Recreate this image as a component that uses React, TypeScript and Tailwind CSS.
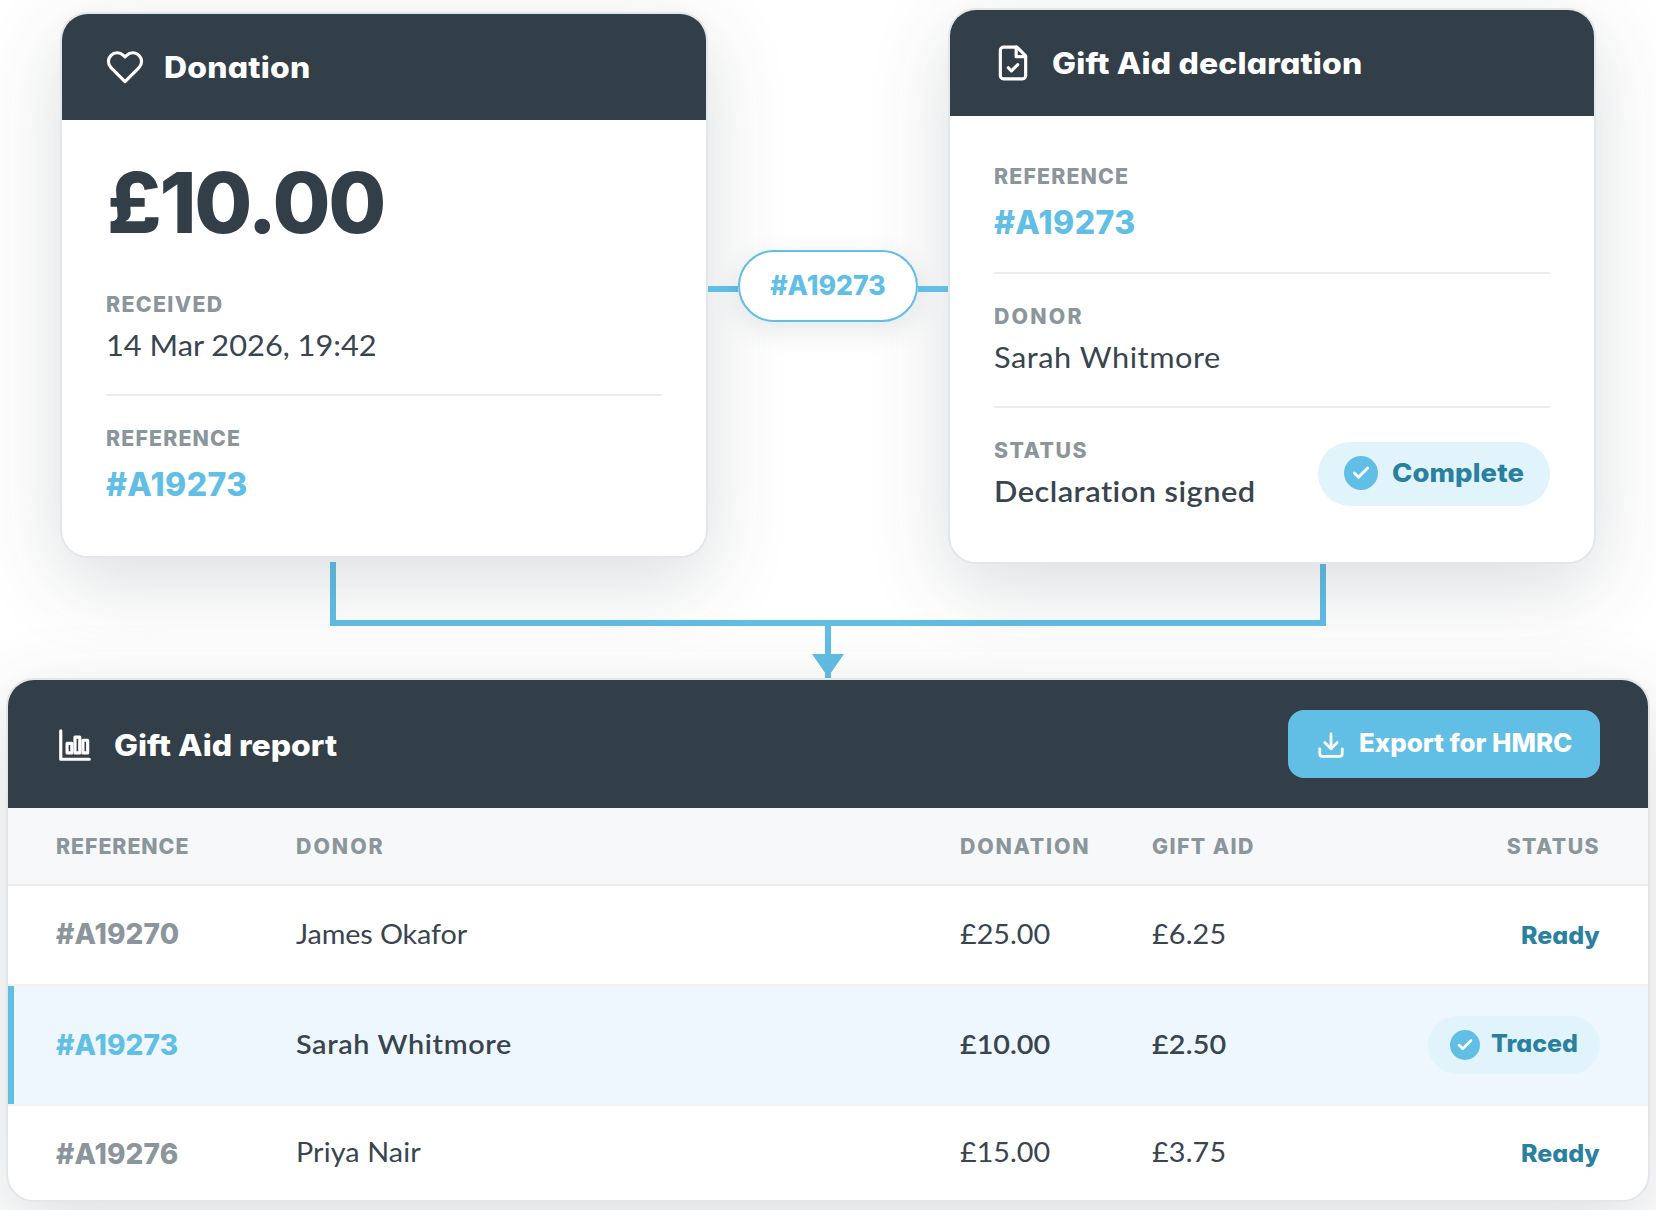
import React from "react";

const HEADING = "font-['Inter',sans-serif] [font-feature-settings:'cv11'] whitespace-nowrap";
const BODY = "font-['Lato',sans-serif] whitespace-nowrap origin-left scale-x-[1.05]";

function HeartIcon() {
  return (
    <svg viewBox="0 0 24 24" className="size-[38px] shrink-0" fill="none" stroke="currentColor" strokeWidth="2" strokeLinecap="round" strokeLinejoin="round">
      <path d="M20.84 4.61a5.5 5.5 0 0 0-7.78 0L12 5.67l-1.06-1.06a5.5 5.5 0 0 0-7.78 7.78l1.06 1.06L12 21.23l7.78-7.78 1.06-1.06a5.5 5.5 0 0 0 0-7.78z" />
    </svg>
  );
}

function FileCheckIcon() {
  return (
    <svg viewBox="0 0 24 24" className="size-[38px] shrink-0" fill="none" stroke="currentColor" strokeWidth="2" strokeLinecap="round" strokeLinejoin="round">
      <path d="M14.5 2H6a2 2 0 0 0-2 2v16a2 2 0 0 0 2 2h12a2 2 0 0 0 2-2V7.5z" />
      <path d="M14 2v6h6" />
      <path d="m9 15 2 2 4-4" />
    </svg>
  );
}

function ChartIcon() {
  return (
    <svg viewBox="0 0 24 24" className="mt-[2px] size-[38px] shrink-0" fill="none" stroke="currentColor" strokeWidth="2" strokeLinecap="round" strokeLinejoin="round">
      <path d="M3 3v18h18" />
      <rect x="7" y="11" width="3" height="6" />
      <rect x="12" y="7" width="3" height="10" />
      <rect x="17" y="9" width="3" height="8" />
    </svg>
  );
}

function DownloadIcon() {
  return (
    <svg viewBox="0 0 24 24" className="mt-[2px] size-[30px] shrink-0" fill="none" stroke="currentColor" strokeWidth="2.2" strokeLinecap="round" strokeLinejoin="round">
      <path d="M21 15v4a2 2 0 0 1-2 2H5a2 2 0 0 1-2-2v-4" />
      <path d="m7 10 5 5 5-5" />
      <path d="M12 15V3" />
    </svg>
  );
}

function CheckDot({ small = false }: { small?: boolean }) {
  return (
    <span className={`flex shrink-0 items-center justify-center rounded-full bg-[#61bee5] text-white ${small ? "size-[30px]" : "size-[34px]"}`}>
      <svg viewBox="0 0 24 24" className={small ? "size-[18px]" : "size-[20px]"} fill="none" stroke="currentColor" strokeWidth="3.4" strokeLinecap="round" strokeLinejoin="round">
        <path d="M20 6 9 17l-5-5" />
      </svg>
    </span>
  );
}

function Card({ className, children }: { className: string; children: React.ReactNode }) {
  return (
    <section className={`relative z-10 shrink-0 overflow-hidden rounded-[28px] border-2 border-[#e3e7ea] bg-white bg-clip-padding shadow-[0_24px_80px_rgba(50,62,72,0.17)] ${className}`}>
      {children}
    </section>
  );
}

function CardHeader({ icon, children }: { icon: React.ReactNode; children: React.ReactNode }) {
  return (
    <header className="flex h-[106px] items-center gap-[20px] bg-[#323e48] px-[44px] text-white">
      {icon}
      {children}
    </header>
  );
}

function Label({ tracking, children }: { tracking: string; children: string }) {
  return <div className={`${HEADING} ${tracking} text-[21.3px] leading-[24px] font-extrabold text-[#8b969c]`}>{children}</div>;
}

function Reference() {
  return <div className={`${HEADING} mt-[14px] pt-[2px] text-[32px] leading-[38px] font-extrabold tracking-[0.4px] text-[#61bee5]`}>#A19273</div>;
}

const rows = [
  { ref: "#A19270", donor: "James Okafor", donorTracking: "tracking-[-0.1px]", amount: "£25.00", giftAid: "£6.25", active: false, box: "h-[100px] border-b-2", refPad: "pb-[2px]", cellPad: "pb-[2px]" },
  { ref: "#A19273", donor: "Sarah Whitmore", donorTracking: "tracking-[0.6px]", amount: "£10.00", giftAid: "£2.50", active: true, box: "h-[120px] border-b-2", refPad: "pb-[1px]", cellPad: "pb-[2px]" },
  { ref: "#A19276", donor: "Priya Nair", donorTracking: "tracking-[0.1px]", amount: "£15.00", giftAid: "£3.75", active: false, box: "h-[94px]", refPad: "pt-[2px]", cellPad: "pb-[2px]" },
];

const COLS = "grid grid-cols-[240px_664px_192px_1fr] items-center px-[48px]";

export default function App() {
  return (
    <div className="flex h-[1210px] w-[1656px] flex-col overflow-hidden bg-white text-[#38454f]">
      <div className="flex h-[564px] shrink-0 items-start pl-[60px]">
        <Card className="mt-[12px] h-[546px] w-[648px]">
          <CardHeader icon={<HeartIcon />}>
            <h2 className={`${HEADING} origin-left scale-x-[1.09] pt-[2px] text-[29.3px] font-extrabold tracking-[0.2px]`}>Donation</h2>
          </CardHeader>
          <div className="px-[44px] pt-[42px]">
            <div className={`${HEADING} pl-[1px] text-[84px] leading-[82px] font-extrabold tracking-[-2.2px] text-[#323e48]`}>£10.00</div>
            <div className="mt-[48px] border-b-2 border-[#ecedef] pb-[29px]">
              <Label tracking="tracking-[1.35px]">RECEIVED</Label>
              <div className={`${BODY} mt-[9px] text-[29.3px] leading-[40px]`}>14 Mar 2026, 19:42</div>
            </div>
            <div className="pt-[30px]">
              <Label tracking="tracking-[1.15px]">REFERENCE</Label>
              <Reference />
            </div>
          </div>
        </Card>

        <div className="relative z-20 mt-[250px] flex h-[72px] w-[240px] shrink-0 items-center">
          <span className="mt-[6px] h-[6px] grow bg-[#61bee5]" />
          <span className={`${HEADING} flex h-[72px] w-[180px] items-center justify-center rounded-full border-2 border-[#61bee5] bg-white pb-[1px] text-[26.6px] font-extrabold tracking-[0.05px] text-[#61bee5] shadow-[0_8px_28px_rgba(50,62,72,0.12)]`}>
            #A19273
          </span>
          <span className="mt-[6px] h-[6px] grow bg-[#61bee5]" />
        </div>

        <Card className="mt-[8px] h-[556px] w-[648px]">
          <CardHeader icon={<FileCheckIcon />}>
            <h2 className={`${HEADING} origin-left scale-x-[1.09] pt-[2px] text-[29.3px] font-extrabold tracking-[0.15px]`}>Gift Aid declaration</h2>
          </CardHeader>
          <div className="px-[44px] pt-[48px]">
            <div className="border-b-2 border-[#ecedef] pb-[30px]">
              <Label tracking="tracking-[1.15px]">REFERENCE</Label>
              <Reference />
            </div>
            <div className="border-b-2 border-[#ecedef] pt-[30px] pb-[29px]">
              <Label tracking="tracking-[2.2px]">DONOR</Label>
              <div className={`${BODY} mt-[9px] text-[29.3px] leading-[40px] tracking-[0.5px]`}>Sarah Whitmore</div>
            </div>
            <div className="flex items-start justify-between pt-[30px]">
              <div>
                <Label tracking="tracking-[1.5px]">STATUS</Label>
                <div className={`${BODY} mt-[9px] text-[29.3px] leading-[40px] font-semibold tracking-[0.45px]`}>Declaration signed</div>
              </div>
              <div className="mt-[4px] flex h-[64px] w-[232px] items-center gap-[14px] rounded-full bg-[#e2f4fb] pb-[2px] pl-[26px]">
                <CheckDot />
                <span className={`${HEADING} origin-left scale-x-[1.08] pt-[1px] text-[25.4px] font-extrabold tracking-[0.1px] text-[#2a809f]`}>Complete</span>
              </div>
            </div>
          </div>
        </Card>
      </div>

      <div className="-mt-[2px] flex h-[116px] shrink-0 flex-col items-center text-[#61bee5]">
        <span className="h-[64px] w-[996px] shrink-0 border-x-[6px] border-b-[6px] border-[#61bee5]" />
        <span className="h-[28px] w-[6px] shrink-0 bg-[#61bee5]" />
        <svg viewBox="0 0 32 24" className="h-[24px] w-[32px] shrink-0" fill="currentColor">
          <path d="M0 0h32L19 18.7V24h-6v-5.3z" />
        </svg>
      </div>

      <Card className="ml-[6px] h-[524px] w-[1644px]">
        <header className="flex h-[128px] items-center bg-[#323e48] px-[48px] text-white">
          <ChartIcon />
          <h2 className={`${HEADING} ml-[20px] origin-left scale-x-[1.09] pt-[4px] text-[29.3px] font-extrabold`}>Gift Aid report</h2>
          <button className="ml-auto flex h-[68px] w-[312px] items-center gap-[13px] rounded-[16px] bg-[#61bee5] pl-[28px] text-white">
            <DownloadIcon />
            <span className={`${HEADING} origin-left scale-x-[1.03] text-[25.2px] font-extrabold tracking-[-0.05px]`}>Export for HMRC</span>
          </button>
        </header>
        <div className={`${COLS} h-[78px] border-b-2 border-[#eaecee] bg-[#f6f8fa]`}>
          <Label tracking="tracking-[0.95px]">REFERENCE</Label>
          <Label tracking="tracking-[2px]">DONOR</Label>
          <Label tracking="tracking-[1.8px]">DONATION</Label>
          <div className="flex justify-between">
            <Label tracking="tracking-[1.4px]">GIFT AID</Label>
            <Label tracking="tracking-[1.4px]">STATUS</Label>
          </div>
        </div>
        {rows.map((r) => (
          <div key={r.ref} className={`${COLS} relative border-[#f1f3f5] text-[27.4px] ${r.box} ${r.active ? "bg-[#eff7fe] bg-clip-padding font-semibold" : ""}`}>
            {r.active && <span className="absolute inset-y-0 left-0 w-[6px] bg-[#61bee5]" />}
            <div className={`${HEADING} ${r.refPad} text-[28px] font-extrabold tracking-[0.1px] ${r.active ? "text-[#61bee5]" : "text-[#8b969c]"}`}>{r.ref}</div>
            <div className={`${BODY} ${r.cellPad} ${r.donorTracking}`}>{r.donor}</div>
            <div className={`${BODY} ${r.cellPad}`}>{r.amount}</div>
            <div className="flex items-center justify-between">
              <span className={`${BODY} ${r.cellPad} tracking-[0.15px]`}>{r.giftAid}</span>
              {r.active ? (
                <span className="flex h-[58px] w-[172px] items-center gap-[11px] rounded-full bg-[#e2f4fb] pl-[22px]">
                  <CheckDot small />
                  <span className={`${HEADING} origin-left scale-x-[1.04] pb-[2px] text-[24px] font-extrabold text-[#2a809f]`}>Traced</span>
                </span>
              ) : (
                <span className={`${HEADING} origin-right scale-x-[1.04] pt-[3px] text-[24px] font-extrabold text-[#2a809f]`}>Ready</span>
              )}
            </div>
          </div>
        ))}
      </Card>
    </div>
  );
}
